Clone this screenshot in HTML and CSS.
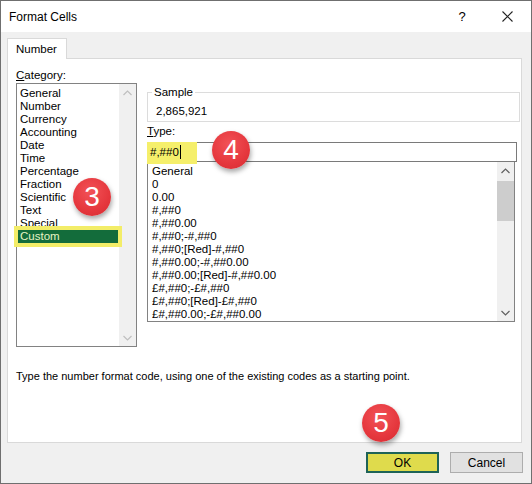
FILE: index.html
```html
<!DOCTYPE html>
<html lang="en">
<head>
    <meta charset="UTF-8">
    <title>Format Cells</title>
    <link rel="stylesheet" href="styles.css">
</head>
<body>
    <div class="window">
        <!-- Title bar -->
        <div class="titlebar">
            <span class="title">Format Cells</span>
            <span class="help">?</span>
            <span class="close">
                <svg width="11" height="11" viewBox="0 0 11 11"><path d="M0.5 0.5 L10.5 10.5 M10.5 0.5 L0.5 10.5" stroke="#222" stroke-width="1.1" fill="none"/></svg>
            </span>
        </div>

        <div class="content">
            <div class="tabs"><div class="tab">Number</div></div>

            <div class="panel">
                <div class="cols">
                    <!-- Category list -->
                    <div class="col-left">
                        <div class="label"><u>C</u>ategory:</div>
                        <div class="listbox cat-list">
                            <ul class="items">
                                <li>General</li>
                                <li>Number</li>
                                <li>Currency</li>
                                <li>Accounting</li>
                                <li>Date</li>
                                <li>Time</li>
                                <li>Percentage</li>
                                <li>Fraction</li>
                                <li>Scientific</li>
                                <li>Text</li>
                                <li>Special</li>
                                <li class="selected">Custom</li>
                            </ul>
                            <div class="scrollbar disabled">
                                <span class="arrow"><svg width="9" height="6" viewBox="0 0 9 6"><path d="M0.5 5 L4.5 1 L8.5 5" stroke="currentColor" stroke-width="1.2" fill="none"/></svg></span>
                                <span class="track"></span>
                                <span class="arrow"><svg width="9" height="6" viewBox="0 0 9 6"><path d="M0.5 1 L4.5 5 L8.5 1" stroke="currentColor" stroke-width="1.2" fill="none"/></svg></span>
                            </div>
                        </div>
                    </div>

                    <!-- Sample + type -->
                    <div class="col-right">
                        <fieldset class="sample">
                            <legend>Sample</legend>
                            <div class="sample-value">2,865,921</div>
                        </fieldset>
                        <div class="label type-label"><u>T</u>ype:</div>
                        <div class="type-input">
                            <span class="mark"></span>
                            <span class="type-text">#,##0</span><span class="caret"></span>
                        </div>
                        <div class="listbox type-list">
                            <ul class="items">
                                <li>General</li>
                                <li>0</li>
                                <li>0.00</li>
                                <li>#,##0</li>
                                <li>#,##0.00</li>
                                <li>#,##0;-#,##0</li>
                                <li>#,##0;[Red]-#,##0</li>
                                <li>#,##0.00;-#,##0.00</li>
                                <li>#,##0.00;[Red]-#,##0.00</li>
                                <li>£#,##0;-£#,##0</li>
                                <li>£#,##0;[Red]-£#,##0</li>
                                <li>£#,##0.00;-£#,##0.00</li>
                            </ul>
                            <div class="scrollbar">
                                <span class="arrow"><svg width="9" height="6" viewBox="0 0 9 6"><path d="M0.5 5 L4.5 1 L8.5 5" stroke="currentColor" stroke-width="1.2" fill="none"/></svg></span>
                                <span class="track"><span class="thumb"></span></span>
                                <span class="arrow"><svg width="9" height="6" viewBox="0 0 9 6"><path d="M0.5 1 L4.5 5 L8.5 1" stroke="currentColor" stroke-width="1.2" fill="none"/></svg></span>
                            </div>
                        </div>
                    </div>
                </div>

                <p class="hint">Type the number format code, using one of the existing codes as a starting point.</p>
            </div>

            <div class="buttons">
                <button class="btn ok">OK</button>
                <button class="btn">Cancel</button>
            </div>
        </div>

        <!-- step badges -->
        <div class="badge b3">3</div>
        <div class="badge b4">4</div>
        <div class="badge b5">5</div>
    </div>
</body>
</html>
```

FILE: styles.css
```css
body {
    margin: 0;
    font-family: "Liberation Sans", Arial, sans-serif;
    font-size: 11.5px;
    color: #000;
    background: #fff;
}
.window {
    position: relative;
    width: 532px;
    height: 484px;
    box-sizing: border-box;
    border: 1px solid #6f6f6f;
    background-color: #f0f0f0;
    overflow: hidden;
}
.titlebar {
    height: 31px;
    background-color: #fff;
    display: flex;
    align-items: center;
}
.title {
    margin-left: 8px;
    flex: 1;
    font-size: 12px;
}
.help {
    width: 12px;
    margin-right: 34px;
    font-size: 13px;
    text-align: center;
}
.close {
    display: flex;
    margin-right: 18px;
}
.content {
    padding: 6px 8px 0 6px;
}
.tabs {
    display: flex;
    position: relative;
    z-index: 1;
}
.tab {
    width: 60px;
    height: 21px;
    line-height: 21px;
    padding-left: 8px;
    box-sizing: border-box;
    background-color: #fff;
    border: 1px solid #d9d9d9;
    border-bottom: none;
    margin-bottom: -1px;
}
.panel {
    width: 515px;
    height: 385px;
    box-sizing: border-box;
    background-color: #fff;
    border: 1px solid #d9d9d9;
    padding: 9px 0 0 8px;
}
.cols {
    display: flex;
    gap: 10px;
    height: 279px;
}
.label {
    height: 14px;
    line-height: 14px;
}
.col-left {
    width: 121px;
}
.col-left .label {
    margin-bottom: 1px;
}
.col-right {
    width: 373px;
}
.listbox {
    display: flex;
    box-sizing: border-box;
    border: 1px solid #828282;
    background-color: #fff;
}
.items {
    list-style: none;
    margin: 0;
    padding: 3px 1px 0 1px;
    flex: 1;
}
.items li {
    height: 13px;
    line-height: 13px;
    padding-left: 2px;
    white-space: nowrap;
}
.items li.selected {
    background-color: #136c3b;
    color: #e6f3c4;
    box-shadow: 0 0 0 4px #f3ed68;
    position: relative;
}
.cat-list {
    height: 264px;
}
.scrollbar {
    width: 17px;
    background-color: #f0f0f0;
    display: flex;
    flex-direction: column;
    color: #606060;
}
.scrollbar.disabled {
    color: #bfbfbf;
}
.arrow {
    height: 17px;
    display: flex;
    align-items: center;
    justify-content: center;
}
.track {
    flex: 1;
    padding-top: 2px;
}
.thumb {
    display: block;
    width: 17px;
    height: 40px;
    background-color: #cdcdcd;
}
.sample {
    margin: 17px 0 0 0;
    padding: 0 0 3px 4px;
    border: 1px solid #dcdcdc;
    min-width: 0;
}
.sample legend {
    padding: 0 2px;
    line-height: 14px;
}
.sample-value {
    margin-top: 5px;
    padding-left: 4px;
    line-height: 14px;
}
.type-label {
    margin-top: 2px;
    margin-bottom: 4px;
}
.type-input {
    position: relative;
    width: 370px;
    height: 20px;
    box-sizing: border-box;
    border: 1px solid #7a7a7a;
    display: flex;
    align-items: center;
    padding-left: 2px;
}
.mark {
    position: absolute;
    left: -1px;
    top: -1px;
    width: 50px;
    height: 22px;
    background-color: #f5ef6b;
}
.type-text {
    position: relative;
}
.caret {
    position: relative;
    width: 1px;
    height: 14px;
    margin-left: 1px;
    background-color: #000;
}
.type-list {
    width: 368px;
    height: 161px;
    margin-top: -1px;
}
.type-list .items {
    padding-left: 2px;
}
.hint {
    margin: 22px 0 0 0;
    line-height: 14px;
    font-size: 11px;
}
.buttons {
    display: flex;
    justify-content: flex-end;
    gap: 11px;
    margin-top: 9px;
}
.btn {
    width: 73px;
    height: 21px;
    font-family: inherit;
    font-size: 12px;
    background-color: #e1e1e1;
    border: 1px solid #adadad;
    padding: 0;
    margin: 0;
}
.btn.ok {
    background-color: #dfdb4c;
    border: 2px solid #1e6357;
}
.badge {
    position: absolute;
    width: 38px;
    height: 38px;
    border-radius: 50%;
    background: radial-gradient(circle at 45% 35%, #f25257 0%, #e5373d 60%, #d42c32 100%);
    box-shadow: 1px 3px 5px rgba(0, 0, 0, 0.35);
    color: #fff;
    font-family: "Liberation Sans", Arial, sans-serif;
    font-size: 28px;
    line-height: 38px;
    text-align: center;
}
.b3 {
    left: 72px;
    top: 177px;
}
.b4 {
    left: 211px;
    top: 130px;
}
.b5 {
    left: 361px;
    top: 403px;
}
```
